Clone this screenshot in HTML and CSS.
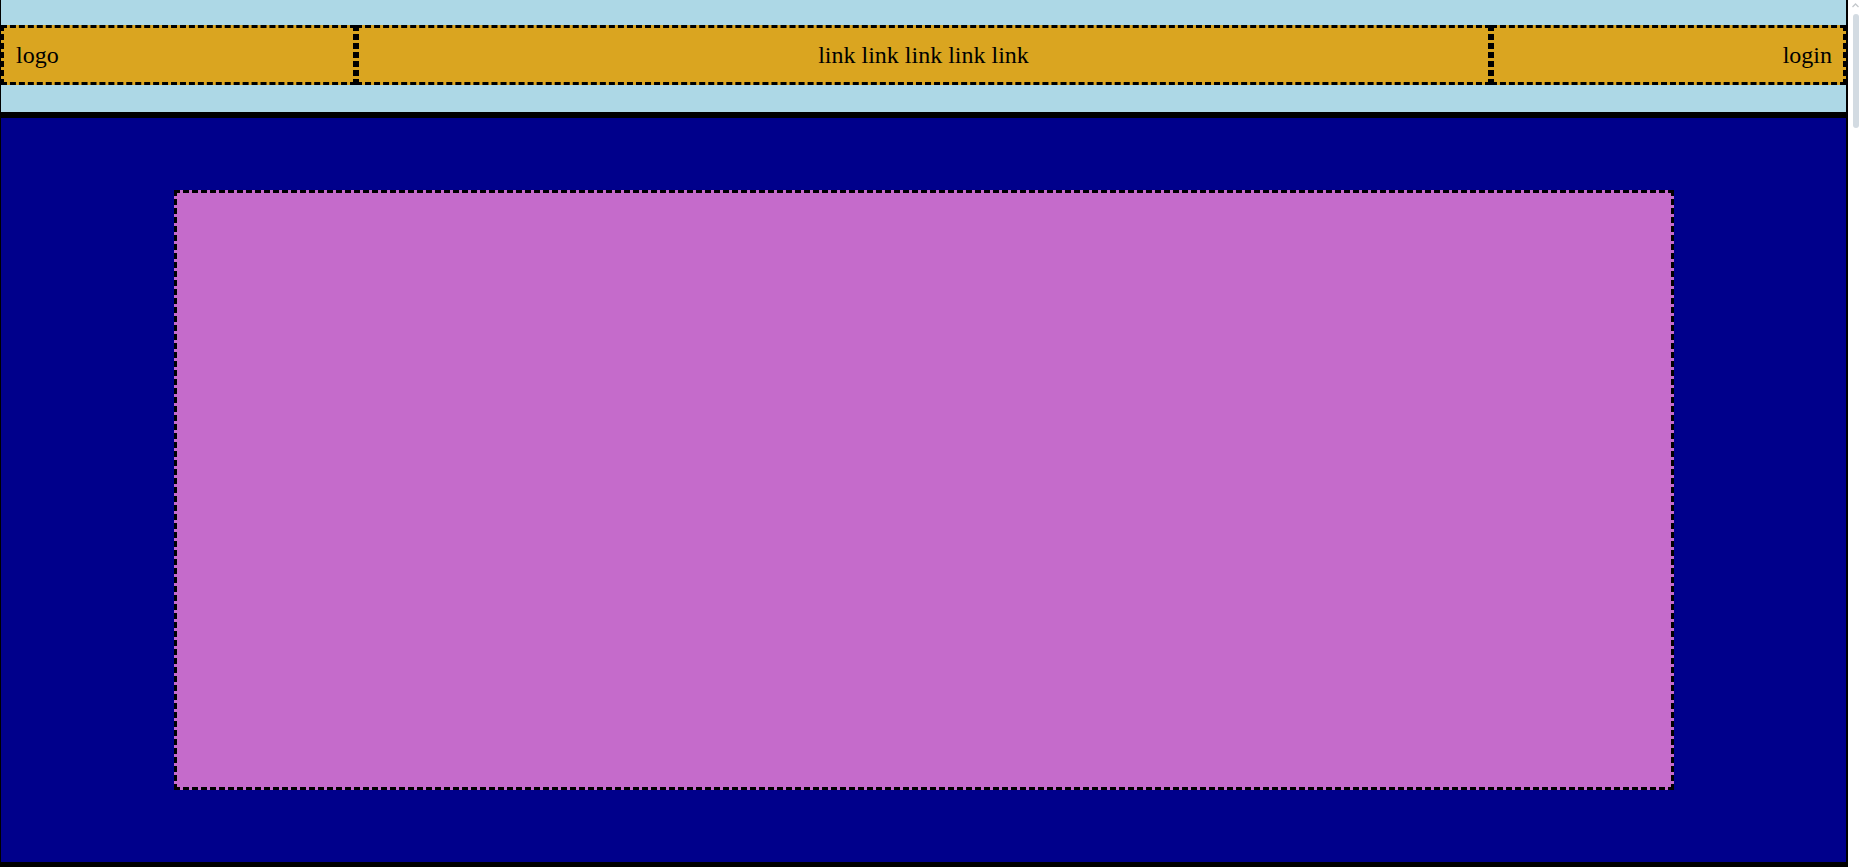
FILE: index.html
```html
<!DOCTYPE html>
<html lang="en">
<head>
<meta charset="utf-8">
<title>Layout</title>
<link rel="stylesheet" href="styles.css">
</head>
<body>
<div class="page">
  <header class="site-header">
    <nav class="nav">
      <div class="nav-box nav-logo">logo</div>
      <div class="nav-box nav-links">link link link link link</div>
      <div class="nav-box nav-login">login</div>
    </nav>
  </header>
  <main class="site-main">
    <section class="content-box"></section>
  </main>
</div>
<div class="scrollbar" aria-hidden="true">
  <svg class="scroll-arrow" width="15" height="12" viewBox="0 0 15 12">
    <polyline points="4.5,7 7.5,4 10.5,7" fill="none" stroke="#c4c8cc" stroke-width="1.3"/>
  </svg>
  <div class="scroll-thumb"></div>
</div>
</body>
</html>
```

FILE: styles.css
```css
html, body {
  margin: 0;
  padding: 0;
}

body {
  background: #ffffff;
  font-family: "Liberation Serif", "Times New Roman", serif;
  font-size: 24px;
  color: #000000;
  overflow: hidden;
}

.page {
  width: calc(100% - 15px);
  box-sizing: border-box;
  border-left: 1px solid #000000;
  border-right: 2px solid #000000;
}

.site-header {
  background: #add8e6;
  padding: 25px 0 27px;
  border-bottom: 6px solid #000000;
}

.nav {
  display: flex;
  height: 60px;
}

.nav-box {
  box-sizing: border-box;
  height: 60px;
  border: 3px dashed #000000;
  background: #daa520;
  display: flex;
  align-items: center;
  padding: 0 12px;
}

.nav-logo {
  flex: 0 0 355px;
}

.nav-links {
  flex: 1 1 auto;
  justify-content: center;
}

.nav-login {
  flex: 0 0 355px;
  justify-content: flex-end;
  padding-right: 11px;
}

.site-main {
  background: #00008b;
  height: 744px;
  display: flex;
  align-items: center;
  justify-content: center;
  border-bottom: 5px solid #000000;
}

.content-box {
  box-sizing: border-box;
  width: 1500px;
  height: 600px;
  background: #c56bcb;
  border: 3px dashed #000000;
}

.scrollbar {
  position: fixed;
  top: 0;
  right: 0;
  width: 15px;
  height: 100%;
  background: #ffffff;
  display: flex;
  flex-direction: column;
  align-items: center;
}

.scroll-arrow {
  display: block;
  flex: 0 0 auto;
}

.scroll-thumb {
  margin-top: 2px;
  width: 6px;
  height: 114px;
  border-radius: 3px;
  background: #d3dbe2;
}
```
